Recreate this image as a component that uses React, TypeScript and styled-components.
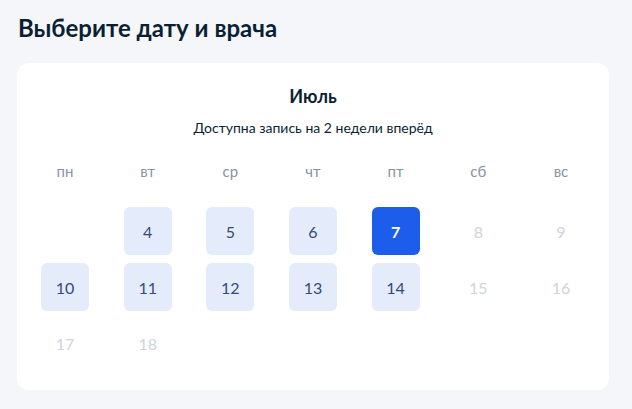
import styled, { createGlobalStyle } from "styled-components";

const GlobalStyle = createGlobalStyle`
  html, body {
    margin: 0;
    padding: 0;
    background: #f4f6fa;
    font-family: Lato, "Noto Sans", sans-serif;
    color: #0b1f33;
  }
`;

type Day = { n?: number; state: "empty" | "free" | "selected" | "off" };

const weekdays = ["пн", "вт", "ср", "чт", "пт", "сб", "вс"];

const days: Day[] = [
  { state: "empty" },
  { n: 4, state: "free" },
  { n: 5, state: "free" },
  { n: 6, state: "free" },
  { n: 7, state: "selected" },
  { n: 8, state: "off" },
  { n: 9, state: "off" },
  { n: 10, state: "free" },
  { n: 11, state: "free" },
  { n: 12, state: "free" },
  { n: 13, state: "free" },
  { n: 14, state: "free" },
  { n: 15, state: "off" },
  { n: 16, state: "off" },
  { n: 17, state: "off" },
  { n: 18, state: "off" },
];

function App() {
  return (
    <Page>
      <GlobalStyle />
      <Title>Выберите дату и врача</Title>
      <Card>
        <Month>Июль</Month>
        <Hint>Доступна запись на 2 недели вперёд</Hint>
        <WeekRow>
          {weekdays.map((d) => (
            <WeekDay key={d}>{d}</WeekDay>
          ))}
        </WeekRow>
        <DaysGrid>
          {days.map((d, i) => (
            <DayCell key={i} $state={d.state}>
              {d.n}
            </DayCell>
          ))}
        </DaysGrid>
      </Card>
    </Page>
  );
}

const Page = styled.div`
  padding: 14px 23px 20px 17px;
`;

const Title = styled.h1`
  margin: 0 0 21px 1px;
  font-size: 24px;
  line-height: 28px;
  font-weight: 700;
  color: #0b1f33;
`;

const Card = styled.div`
  width: 592px;
  box-sizing: border-box;
  background: #ffffff;
  border-radius: 12px;
  padding: 22px 24px 23px;
  display: flex;
  flex-direction: column;
  align-items: center;
`;

const Month = styled.div`
  font-size: 18px;
  line-height: 22px;
  font-weight: 700;
`;

const Hint = styled.div`
  margin-top: 12px;
  font-size: 14px;
  line-height: 18px;
  color: #0b1f33;
`;

const WeekRow = styled.div`
  margin-top: 24px;
  width: 100%;
  display: grid;
  grid-template-columns: repeat(7, 48px);
  justify-content: space-between;
`;

const WeekDay = styled.div`
  text-align: center;
  font-size: 15px;
  line-height: 20px;
  color: #8a93a3;
`;

const DaysGrid = styled.div`
  margin-top: 26px;
  width: 100%;
  display: grid;
  grid-template-columns: repeat(7, 48px);
  grid-auto-rows: 48px;
  row-gap: 8px;
  justify-content: space-between;
`;

const DayCell = styled.div<{ $state: Day["state"] }>`
  display: flex;
  align-items: center;
  justify-content: center;
  border-radius: 6px;
  font-size: 16px;
  background: ${(p) =>
    p.$state === "free" ? "#e4ecfb" : p.$state === "selected" ? "#1d5deb" : "transparent"};
  color: ${(p) =>
    p.$state === "selected" ? "#ffffff" : p.$state === "off" ? "#d0d4db" : "#36497a"};
  font-weight: ${(p) => (p.$state === "selected" ? 700 : 400)};
`;

export default App;
